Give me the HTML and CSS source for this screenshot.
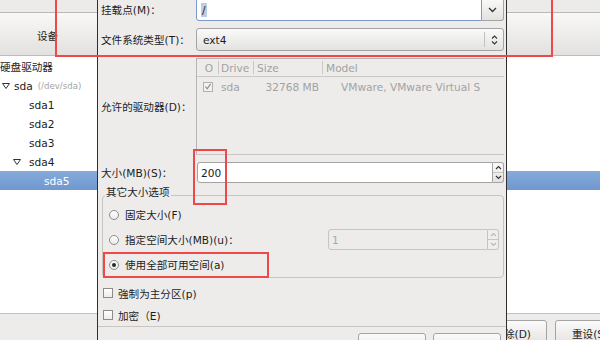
FILE: index.html
```html
<!DOCTYPE html>
<html lang="zh-CN">
<head>
  <meta charset="UTF-8">
  <link rel="stylesheet" href="styles.css">
</head>
<body>
  <div class="window">
    <div class="top-strip"></div>
    <div class="col-header">设备</div>
    <div class="tree">
      <div class="tree-row">硬盘驱动器</div>
      <div class="tree-row row-sda">
        <svg class="expander" width="8" height="6" viewBox="0 0 8 6"><polygon points="0.5,0.5 7.5,0.5 4,5.5" fill="none" stroke="#333" stroke-width="1"/></svg>
        <span>sda</span><span class="dev-path">(/dev/sda)</span>
      </div>
      <div class="tree-row row-part">sda1</div>
      <div class="tree-row row-part">sda2</div>
      <div class="tree-row row-part">sda3</div>
      <div class="tree-row row-ext">
        <svg class="expander" width="8" height="6" viewBox="0 0 8 6"><polygon points="0.5,0.5 7.5,0.5 4,5.5" fill="none" stroke="#333" stroke-width="1"/></svg>
        <span>sda4</span>
      </div>
      <div class="tree-row row-logical selected">sda5</div>
    </div>
    <div class="button-bar">
      <div class="btn btn-delete">删除(D)</div>
      <div class="btn btn-reset">重设(S)</div>
    </div>
  </div>

  <div class="dialog">
    <div class="form">
      <div class="label">挂载点(M)：</div>
      <div class="combo-entry">
        <div class="entry-field"><span class="sel">/</span></div>
        <div class="entry-button">
          <svg width="9" height="6" viewBox="0 0 9 6"><path d="M1 1 L4.5 4.5 L8 1" fill="none" stroke="#333" stroke-width="1.3"/></svg>
        </div>
      </div>

      <div class="label">文件系统类型(T)：</div>
      <div class="combo">
        <span class="combo-text">ext4</span>
        <span class="combo-sep"></span>
        <svg width="7" height="12" viewBox="0 0 7 12"><path d="M1 4.5 L3.5 2 L6 4.5 M1 7.5 L3.5 10 L6 7.5" fill="none" stroke="#333" stroke-width="1.1"/></svg>
      </div>

      <div class="label">允许的驱动器(D)：</div>
      <div class="drive-list">
        <div class="list-head">
          <div class="cell c1">O</div>
          <div class="cell c2">Drive</div>
          <div class="cell c3">Size</div>
          <div class="cell c4">Model</div>
        </div>
        <div class="list-row">
          <div class="cell c1">
            <span class="mini-check">
              <svg width="9" height="9" viewBox="0 0 9 9"><path d="M1.5 4.5 L3.5 7 L7.5 1.5" fill="none" stroke="#8c8c8c" stroke-width="1.3"/></svg>
            </span>
          </div>
          <div class="cell c2">sda</div>
          <div class="cell c3 num">32768 MB</div>
          <div class="cell c4">VMware, VMware Virtual S</div>
        </div>
      </div>

      <div class="label">大小(MB)(S)：</div>
      <div class="spin">
        <div class="spin-field">200</div>
        <div class="spin-buttons">
          <span><svg width="7" height="5" viewBox="0 0 7 5"><path d="M1 4 L3.5 1.5 L6 4" fill="none" stroke="#333" stroke-width="1.1"/></svg></span>
          <span><svg width="7" height="5" viewBox="0 0 7 5"><path d="M1 1 L3.5 3.5 L6 1" fill="none" stroke="#333" stroke-width="1.1"/></svg></span>
        </div>
      </div>
    </div>

    <div class="frame">
      <div class="frame-title">其它大小选项</div>
      <div class="frame-body">
        <div class="radio-row"><span class="radio"></span>固定大小(F)</div>
        <div class="radio-row">
          <span class="radio"></span>指定空间大小(MB)(u)：
          <div class="spin spin-off">
            <div class="spin-field">1</div>
            <div class="spin-buttons">
              <span><svg width="7" height="5" viewBox="0 0 7 5"><path d="M1 4 L3.5 1.5 L6 4" fill="none" stroke="#b8b8b8" stroke-width="1.1"/></svg></span>
              <span><svg width="7" height="5" viewBox="0 0 7 5"><path d="M1 1 L3.5 3.5 L6 1" fill="none" stroke="#b8b8b8" stroke-width="1.1"/></svg></span>
            </div>
          </div>
        </div>
        <div class="radio-row"><span class="radio on"></span>使用全部可用空间(a)</div>
      </div>
    </div>

    <div class="check-row"><span class="check"></span>強制为主分区(p)</div>
    <div class="check-row"><span class="check"></span>加密（E)</div>

    <div class="separator"></div>
    <div class="dialog-buttons">
      <div class="btn btn-dialog">取消(C)</div>
      <div class="btn btn-dialog">确定(O)</div>
    </div>
  </div>

  <div class="mark mark-top"></div>
  <div class="mark mark-size"></div>
  <div class="mark mark-full"></div>
</body>
</html>
```

FILE: styles.css
```css
* {
  box-sizing: border-box;
}

body {
  margin: 0;
  width: 600px;
  height: 340px;
  overflow: hidden;
  position: relative;
  font-family: "DejaVu Sans", "Noto Sans CJK SC", sans-serif;
  font-size: 10.6px;
  color: #1c1c1c;
  background: #fff;
}

/* background window */
.window {
  display: flex;
  flex-direction: column;
  height: 340px;
}

.window > * {
  flex: none;
}

.top-strip {
  height: 13px;
  background: #ecebea;
  border-bottom: 1px solid #b9b9b9;
}

.col-header {
  height: 43px;
  background: linear-gradient(#f8f8f7, #e2e1df);
  border-bottom: 1px solid #bdbcba;
  display: flex;
  align-items: center;
  padding: 3px 0 0 37px;
}

.window > .tree {
  flex: 1;
  background: #fff;
  padding-top: 1px;
}

.tree-row {
  height: 19px;
  display: flex;
  align-items: center;
  white-space: nowrap;
}

.expander {
  flex: none;
}

.row-sda {
  padding-left: 2px;
}

.row-sda .expander {
  margin-right: 4px;
}

.dev-path {
  margin-left: 5px;
  font-size: 8.6px;
  color: #a3a3a3;
}

.row-part {
  padding-left: 29px;
}

.row-ext {
  padding-left: 13px;
}

.row-ext .expander {
  margin-right: 8px;
}

.row-logical {
  padding-left: 44px;
}

.tree-row.selected {
  background: linear-gradient(#86abd9, #6f98d0);
  color: #fff;
}

.button-bar {
  height: 27px;
  background: #edeceb;
  border-top: 1px solid #c4c3c1;
  display: flex;
  gap: 8px;
  padding: 6px 0 0 440px;
}

.btn {
  height: 26px;
  background: linear-gradient(#fafafa, #e3e2e0);
  border: 1px solid #a4a4a4;
  border-radius: 3px;
  display: flex;
  align-items: center;
  white-space: nowrap;
  flex: none;
}

.btn-delete {
  width: 107px;
  justify-content: flex-end;
  padding-right: 15px;
}

.btn-reset {
  width: 90px;
  padding-left: 16px;
}

/* dialog */
.dialog {
  position: absolute;
  left: 97px;
  top: -4px;
  width: 410px;
  height: 350px;
  background: #edeceb;
  border-left: 1px solid #2f2f2f;
  border-right: 1px solid #2f2f2f;
  padding: 2px 2px 0 3px;
  display: flex;
  flex-direction: column;
}

.dialog > * {
  flex: none;
}

.form {
  display: grid;
  grid-template-columns: 95px 1fr;
  grid-template-rows: 23px 23px 97px 21px;
  row-gap: 7px;
}

.label {
  align-self: center;
  white-space: nowrap;
}

.combo-entry {
  display: flex;
  height: 23px;
}

.entry-field {
  flex: 1;
  background: #fff;
  border: 1px solid #7a9bcb;
  border-radius: 3px 0 0 3px;
  display: flex;
  align-items: center;
  padding-left: 4px;
}

.sel {
  background: #bccde6;
  padding: 0 1px;
  line-height: 14px;
}

.entry-button {
  width: 22px;
  background: linear-gradient(#fafafa, #e3e2e0);
  border: 1px solid #a4a4a4;
  border-left: none;
  border-radius: 0 3px 3px 0;
  display: flex;
  align-items: center;
  justify-content: center;
}

.combo {
  height: 23px;
  background: linear-gradient(#fafafa, #e3e2e0);
  border: 1px solid #a4a4a4;
  border-radius: 3px;
  display: flex;
  align-items: center;
  padding: 0 5px 0 6px;
}

.combo-text {
  flex: 1;
}

.combo-sep {
  width: 1px;
  height: 15px;
  background: #c2c1bf;
  margin-right: 6px;
}

.drive-list {
  border: 1px solid #b6b5b3;
  border-right: none;
  border-bottom-color: #c8c7c5;
  color: #a2a2a2;
}

.list-head,
.list-row {
  display: grid;
  grid-template-columns: 21px 35px 69px 1fr;
}

.list-head {
  height: 18px;
  border-bottom: 1px solid #cac9c7;
}

.list-row {
  height: 19px;
}

.cell {
  display: flex;
  align-items: center;
  white-space: nowrap;
  overflow: hidden;
}

.list-head .cell + .cell {
  border-left: 1px solid #c9c8c6;
  margin: 2px 0;
}

.list-head .c1 {
  justify-content: center;
  padding-left: 3px;
}

.list-head .c2 {
  padding-left: 2px;
}

.list-head .c3,
.list-head .c4 {
  padding-left: 3px;
}

.list-row .c1 {
  padding-left: 6px;
}

.list-row .c2 {
  padding-left: 3px;
}

.list-row .num {
  justify-content: flex-end;
  padding-right: 3px;
}

.list-row .c4 {
  padding-left: 19px;
}

.mini-check {
  width: 10px;
  height: 10px;
  border: 1px solid #b0b0b0;
  background: #f2f2f2;
  display: flex;
  align-items: center;
  justify-content: center;
}

.spin {
  display: flex;
  height: 21px;
  margin-left: 1px;
}

.spin-field {
  flex: 1;
  background: #fff;
  border: 1px solid #a4a4a4;
  border-radius: 3px 0 0 3px;
  display: flex;
  align-items: center;
  padding-left: 3px;
}

.spin-buttons {
  width: 11px;
  display: flex;
  flex-direction: column;
  border: 1px solid #a4a4a4;
  border-left: none;
  border-radius: 0 3px 3px 0;
  background: linear-gradient(#fafafa, #e3e2e0);
}

.spin-buttons span {
  flex: 1;
  display: flex;
  align-items: center;
  justify-content: center;
}

.spin-buttons span + span {
  border-top: 1px solid #c6c5c3;
}

.spin-off {
  width: 171px;
  margin-left: auto;
}

.spin-off .spin-field {
  background: #edeceb;
  border-color: #c6c5c3;
  color: #a9a9a9;
}

.spin-off .spin-buttons {
  border-color: #c6c5c3;
  background: #efeeed;
}

/* size options frame */
.frame {
  margin: 12px 0 4px 1px;
  border: 1px solid #c6c5c2;
  border-radius: 4px;
}

.frame-title {
  margin: -10px 0 0 2px;
  line-height: 13px;
  width: max-content;
  padding: 0 1px;
  background: #edeceb;
}

.frame-body {
  padding: 3px 4px 0 6px;
}

.radio-row {
  height: 25px;
  display: flex;
  align-items: center;
  white-space: nowrap;
}

.radio {
  width: 10px;
  height: 10px;
  border: 1px solid #8c8c8c;
  border-radius: 50%;
  background: linear-gradient(#fff, #ebebeb);
  margin-right: 6px;
  display: flex;
  align-items: center;
  justify-content: center;
}

.radio.on::after {
  content: '';
  width: 4px;
  height: 4px;
  border-radius: 50%;
  background: #2a2a2a;
}

.check-row {
  height: 22px;
  display: flex;
  align-items: center;
  padding-left: 2px;
}

.check {
  width: 10px;
  height: 10px;
  border: 1px solid #8c8c8c;
  background: linear-gradient(#fff, #ececec);
  margin-right: 5px;
}

.separator {
  height: 1px;
  background: #c8c7c4;
  margin: 0 -2px 0 -3px;
}

.dialog-buttons {
  display: flex;
  justify-content: flex-end;
  gap: 7px;
  padding: 6px 3px 0 0;
}

.btn-dialog {
  width: 68px;
  justify-content: center;
}

/* red annotation boxes */
.mark {
  position: absolute;
  border: 2px solid #f04848;
}

.mark-top {
  left: 55px;
  top: -10px;
  width: 498px;
  height: 67px;
}

.mark-size {
  left: 193px;
  top: 149px;
  width: 34px;
  height: 56px;
}

.mark-full {
  left: 103px;
  top: 252px;
  width: 166px;
  height: 26px;
}
```
